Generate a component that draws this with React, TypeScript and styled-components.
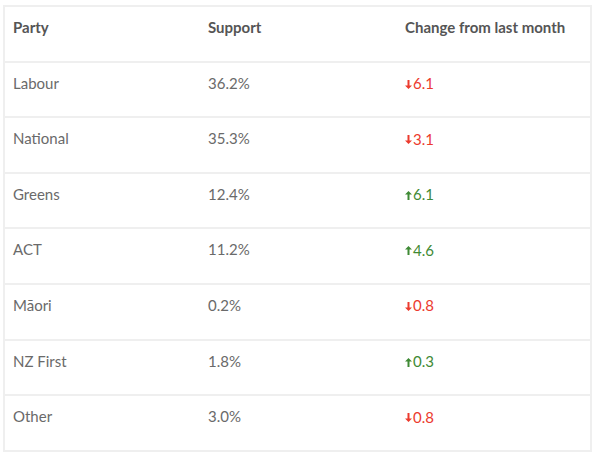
import styled, { createGlobalStyle } from "styled-components";

const GlobalStyle = createGlobalStyle`
  html, body {
    margin: 0;
    padding: 0;
    background: #ffffff;
  }
  body {
    font-family: "Lato", "Open Sans", sans-serif;
  }
`;

type Row = { party: string; support: string; change: string; up: boolean };

const rows: Row[] = [
  { party: "Labour", support: "36.2%", change: "6.1", up: false },
  { party: "National", support: "35.3%", change: "3.1", up: false },
  { party: "Greens", support: "12.4%", change: "6.1", up: true },
  { party: "ACT", support: "11.2%", change: "4.6", up: true },
  { party: "Māori", support: "0.2%", change: "0.8", up: false },
  { party: "NZ First", support: "1.8%", change: "0.3", up: true },
  { party: "Other", support: "3.0%", change: "0.8", up: false },
];

const Arrow = ({ up }: { up: boolean }) => (
  <ArrowIcon width="7" height="9" viewBox="0 0 7 9" $up={up}>
    <path d="M2.5 0h2v5.5H7L3.5 9 0 5.5h2.5z" fill="currentColor" />
  </ArrowIcon>
);

const App = () => {
  return (
    <Page>
      <GlobalStyle />
      <Table>
        <colgroup>
          <Col $w={196} />
          <Col $w={197} />
          <col />
        </colgroup>
        <thead>
          <tr>
            <Head>Party</Head>
            <Head>Support</Head>
            <Head>Change from last month</Head>
          </tr>
        </thead>
        <tbody>
          {rows.map((row) => (
            <tr key={row.party}>
              <Cell>{row.party}</Cell>
              <Cell>{row.support}</Cell>
              <Cell>
                <Change $up={row.up}>
                  <Arrow up={row.up} />
                  {row.change}
                </Change>
              </Cell>
            </tr>
          ))}
        </tbody>
      </Table>
    </Page>
  );
};

export default App;

const Page = styled.div`
  padding: 5px 0 0 3px;
`;

const Table = styled.table`
  width: 589px;
  border-collapse: collapse;
  border: 2px solid #efefef;
  table-layout: fixed;
`;

const Col = styled.col<{ $w: number }>`
  width: ${(p) => p.$w}px;
`;

const Head = styled.th`
  height: 55.6px;
  box-sizing: border-box;
  padding: 11px 8px 0;
  vertical-align: top;
  text-align: left;
  font-size: 15px;
  line-height: 19px;
  font-weight: 700;
  color: #555555;
  border-bottom: 2px solid #efefef;
`;

const Cell = styled.td`
  height: 55.6px;
  box-sizing: border-box;
  padding: 11px 8px 0;
  vertical-align: top;
  font-size: 15px;
  line-height: 19px;
  color: #6a6a6a;
  border-bottom: 2px solid #efefef;
`;

const Change = styled.span<{ $up: boolean }>`
  display: inline-flex;
  align-items: center;
  gap: 1px;
  color: ${(p) => (p.$up ? "#3f8a35" : "#ec3b2e")};
`;

const ArrowIcon = styled.svg<{ $up: boolean }>`
  transform: ${(p) => (p.$up ? "rotate(180deg)" : "none")};
  margin-top: 1px;
`;
